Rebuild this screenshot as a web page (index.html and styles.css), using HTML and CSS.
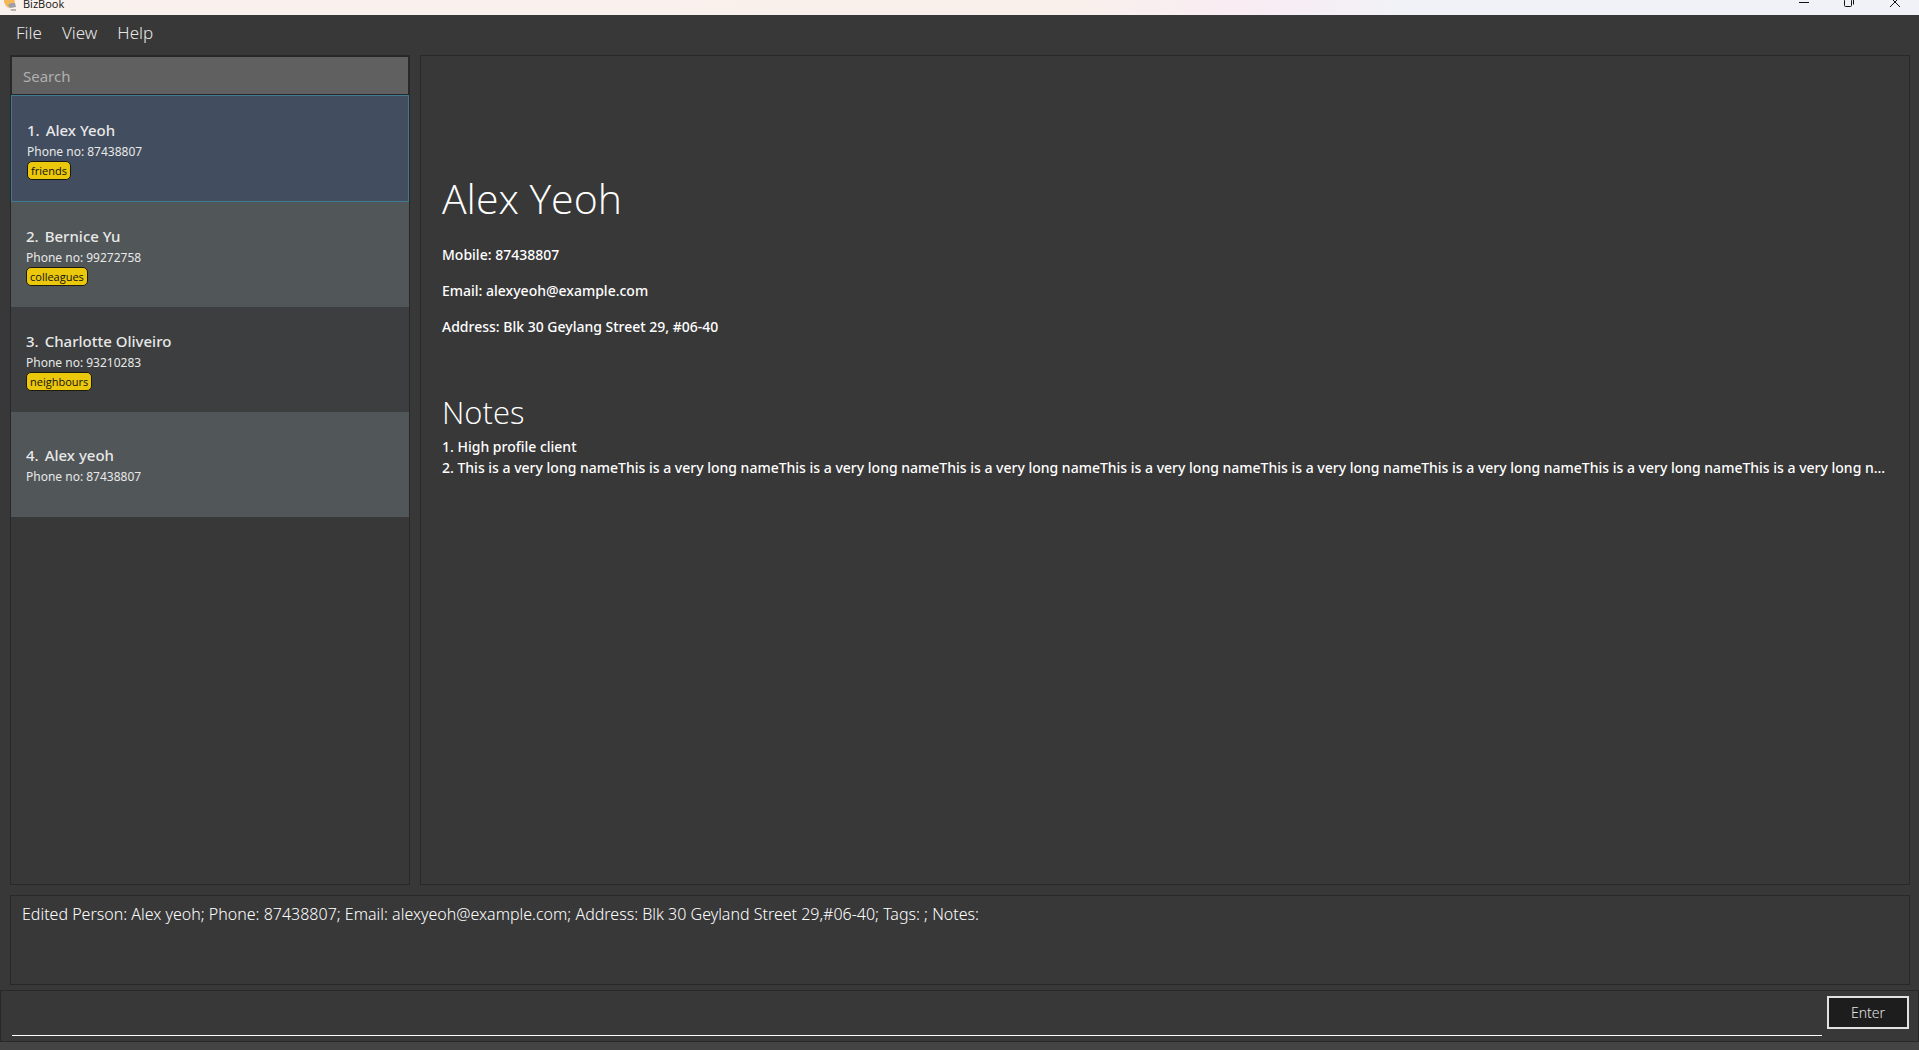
FILE: index.html
```html
<!DOCTYPE html>
<html lang="en">
<head>
<meta charset="utf-8">
<title>BizBook</title>
<link rel="stylesheet" href="styles.css">
</head>
<body>
<div class="window">
  <header class="titlebar">
    <div class="brand">
      <svg class="logo" viewBox="0 0 14 22" aria-hidden="true">
        <path d="M0 3h10l1 8-4 2-2 2-3-2-2-4z" fill="#f6b756"/>
        <path d="M4 12l3-2h4l1 4-6 1z" fill="#9da0a6"/>
        <path d="M2 13l4 3h4v1H7z" fill="#f3c58a"/>
        <path d="M7 16h5v2H7z" fill="#b9b2b0"/>
      </svg>
      <span>BizBook</span>
    </div>
    <div class="controls">
      <button class="control" aria-label="Minimize"><svg viewBox="0 0 12 12"><path d="M1 6.500h10"/></svg></button>
      <button class="control" aria-label="Restore"><svg viewBox="0 0 12 12"><rect x="0.500" y="3.500" width="7" height="7" rx="1"/><path d="M2.500 1.500h5q2 0 2 2v5"/></svg></button>
      <button class="control" aria-label="Close"><svg viewBox="0 0 12 12"><path d="M0 1l10 10M10 1L0 11"/></svg></button>
    </div>
  </header>

  <nav class="menubar">
    <button class="menu">File</button>
    <button class="menu">View</button>
    <button class="menu">Help</button>
  </nav>

  <main class="panes">
    <section class="sidebar">
      <input class="search" type="text" placeholder="Search" aria-label="Search">
      <ul class="people">
        <li class="person selected">
          <h2 class="person-name"><span>1.</span><span>Alex Yeoh</span></h2>
          <p class="person-phone">Phone no: 87438807</p>
          <span class="tag">friends</span>
        </li>
        <li class="person">
          <h2 class="person-name"><span>2.</span><span>Bernice Yu</span></h2>
          <p class="person-phone">Phone no: 99272758</p>
          <span class="tag">colleagues</span>
        </li>
        <li class="person">
          <h2 class="person-name"><span>3.</span><span>Charlotte Oliveiro</span></h2>
          <p class="person-phone">Phone no: 93210283</p>
          <span class="tag">neighbours</span>
        </li>
        <li class="person">
          <h2 class="person-name"><span>4.</span><span>Alex yeoh</span></h2>
          <p class="person-phone">Phone no: 87438807</p>
        </li>
      </ul>
    </section>

    <section class="details">
      <h1 class="name">Alex Yeoh</h1>
      <div class="fields">
        <p class="field">Mobile: 87438807</p>
        <p class="field">Email: alexyeoh@example.com</p>
        <p class="field">Address: Blk 30 Geylang Street 29, #06-40</p>
      </div>
      <h2 class="notes-title">Notes</h2>
      <p class="note">1. High profile client</p>
      <p class="note">2. This is a very long nameThis is a very long nameThis is a very long nameThis is a very long nameThis is a very long nameThis is a very long nameThis is a very long nameThis is a very long nameThis is a very long n...</p>
    </section>
  </main>

  <output class="result">Edited Person: Alex yeoh; Phone: 87438807; Email: alexyeoh@example.com; Address: Blk 30 Geyland Street 29,#06-40; Tags: ; Notes:</output>

  <form class="command">
    <input class="command-input" type="text" aria-label="Command">
    <button class="enter" type="button">Enter</button>
  </form>
  <footer class="statusbar"></footer>
</div>
</body>
</html>
```
FILE: styles.css
```css
* {
  box-sizing: border-box;
}

body {
  margin: 0;
  background: #383838;
  color: #fff;
  font-family: "Noto Sans", "Open Sans", sans-serif;
  font-size: 14px;
}

h1, h2, p, ul {
  margin: 0;
  padding: 0;
  font-weight: 400;
}

button, input {
  font-family: inherit;
  border: 0;
  border-radius: 0;
  margin: 0;
}

.window {
  display: flex;
  flex-direction: column;
  min-height: 100vh;
}

.titlebar {
  display: flex;
  justify-content: space-between;
  align-items: flex-end;
  height: 15px;
  overflow: hidden;
  background: linear-gradient(90deg, #f9f1ee, #f9f0ec 56%, #f9ecf3 65%, #f1f2f7 73%);
  color: #111;
}

.brand {
  display: flex;
  align-items: center;
  gap: 5px;
  height: 23px;
  padding-left: 4px;
  font-family: "Open Sans", sans-serif;
  font-size: 11px;
}

.logo {
  width: 14px;
  height: 22px;
}

.controls {
  display: flex;
}

.control {
  display: flex;
  align-items: center;
  justify-content: center;
  width: 46px;
  height: 26px;
  padding: 0;
  background: none;
}

.control svg {
  width: 12px;
  height: 12px;
  fill: none;
  stroke: #111;
}

.menubar {
  display: flex;
  height: 40px;
  padding: 0 6px;
}

.menu {
  height: 35px;
  padding: 0 10px;
  background: none;
  color: #e6e6e6;
  font-size: 17px;
  font-weight: 300;
}

.panes {
  display: flex;
  flex: 1;
  gap: 10px;
  padding: 0 9px 10px 10px;
}

.sidebar {
  flex: 0 0 400px;
  border: 1px solid #282828;
}

.search {
  display: block;
  width: 100%;
  height: 39px;
  padding: 0 11px;
  border: 1px solid #282828;
  background: #606060;
  color: #fff;
  font-size: 15px;
}

.search::placeholder {
  color: #b0b0b0;
}

.people {
  list-style: none;
}

.person {
  display: flex;
  flex-direction: column;
  justify-content: center;
  align-items: flex-start;
  height: 105px;
  padding: 1px 0 0 15px;
  background: #3c3e3f;
  color: #e8e8e8;
}

.person:nth-child(even) {
  background: #515658;
}

.person.selected {
  height: 107px;
  border: 1px solid #3e7b91;
  background: #424d5f;
}

.person-name {
  display: flex;
  gap: 6px;
  font-size: 15px;
  font-weight: 500;
  line-height: 23px;
}

.person-phone {
  font-size: 12px;
  line-height: 19px;
}

.tag {
  height: 19px;
  padding: 0 3px;
  border: 1px solid #1c1a0c;
  border-radius: 5px;
  background: #ecc80c;
  color: #111;
  font-family: "Open Sans", sans-serif;
  font-size: 11px;
  line-height: 17px;
}

.details {
  flex: 1;
  min-width: 0;
  padding: 114px 21px 0;
  border: 1px solid #282828;
}

.name {
  font-family: "Open Sans", sans-serif;
  font-size: 41px;
  font-weight: 300;
  line-height: 56px;
}

.fields {
  display: flex;
  flex-direction: column;
  gap: 16px;
  padding: 19px 0 53px;
}

.field {
  font-weight: 500;
  line-height: 20px;
}

.notes-title {
  padding-bottom: 2px;
  font-family: "Open Sans", sans-serif;
  font-size: 31px;
  font-weight: 300;
  line-height: 44px;
}

.note {
  overflow: hidden;
  font-weight: 500;
  line-height: 21px;
  white-space: nowrap;
}

.result {
  height: 90px;
  margin: 0 9px 5px 10px;
  padding: 7px 11px;
  border: 1px solid #282828;
  font-size: 16px;
  font-weight: 300;
  line-height: 22px;
}

.command {
  display: flex;
  gap: 5px;
  height: 52px;
  padding: 5px 9px 5px 11px;
  border: 1px solid #282828;
}

.command-input {
  flex: 1;
  min-width: 0;
  border-bottom: 1px solid #fff;
  background: none;
  color: #fff;
  font-size: 16px;
}

.enter {
  width: 82px;
  height: 33px;
  padding: 0;
  border: 2px solid #e2e2e2;
  background: #1d1d1d;
  color: #e2e2e2;
  font-size: 14px;
  font-weight: 300;
}

.statusbar {
  height: 8px;
  background: #444;
}
```
